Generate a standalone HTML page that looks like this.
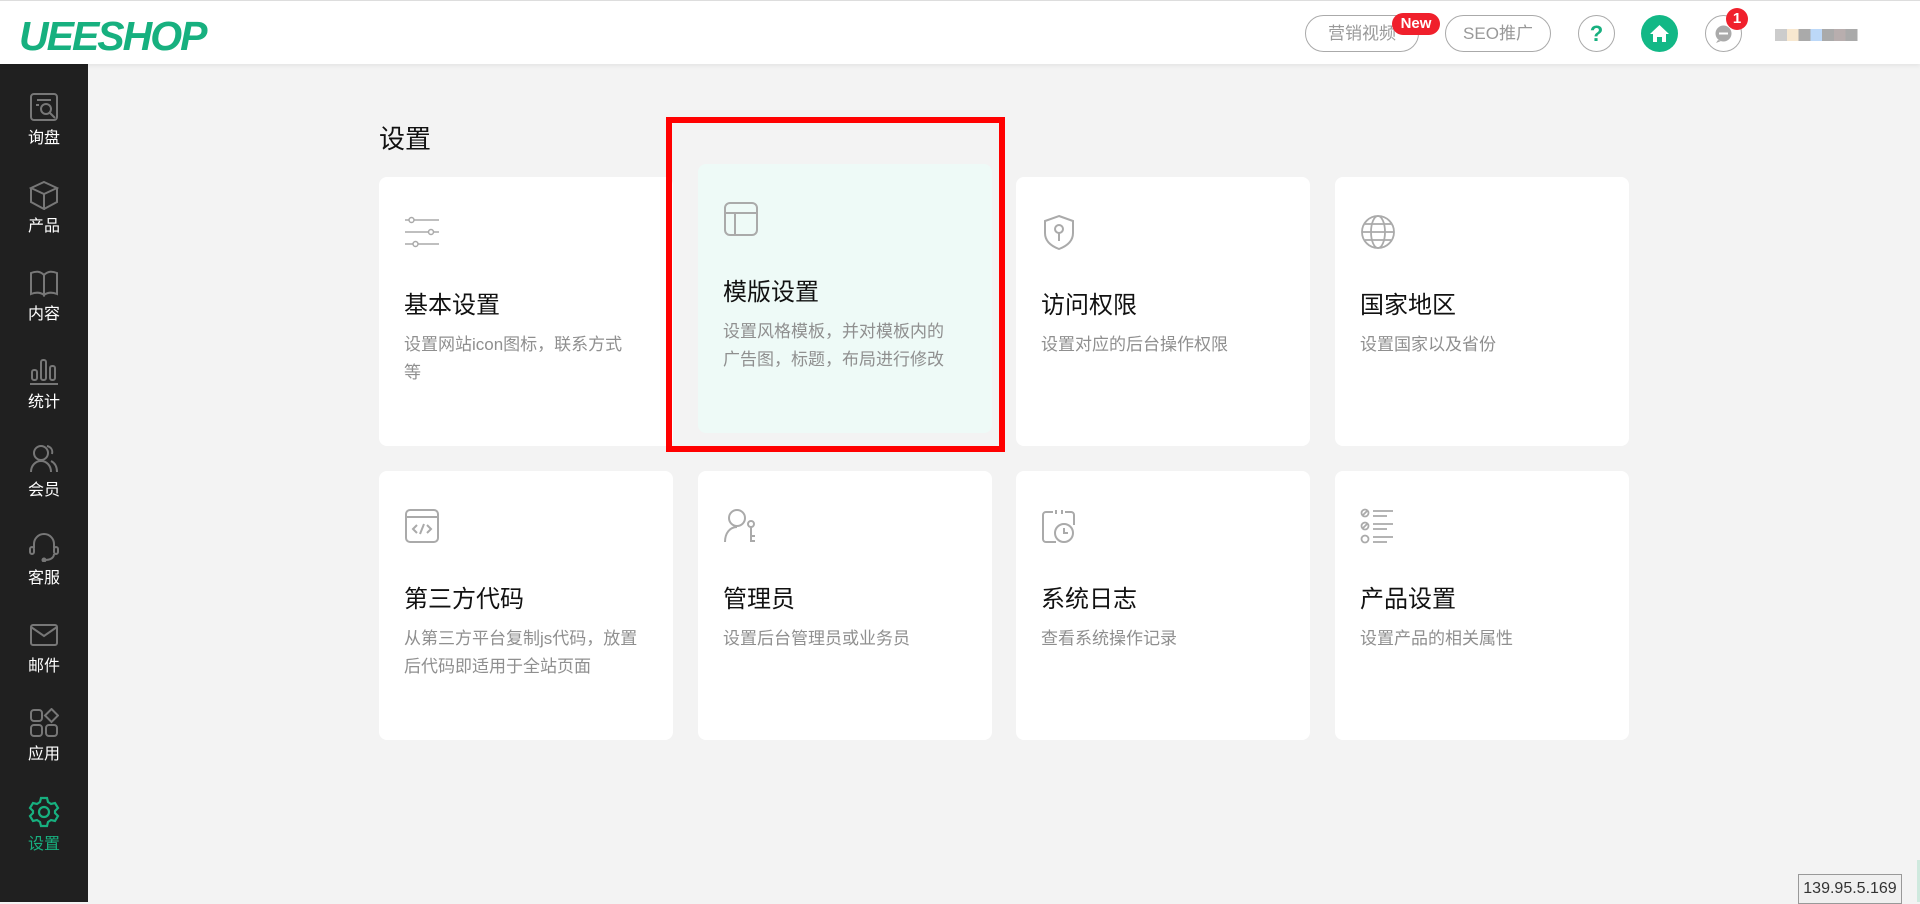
<!DOCTYPE html>
<html><head><meta charset="utf-8">
<style>
*{margin:0;padding:0;box-sizing:border-box}
body{width:1920px;height:902px;overflow:hidden;background:#f3f3f3;font-family:"Liberation Sans","Noto Sans CJK SC",sans-serif;position:relative}
.hdr{position:absolute;left:0;top:0;width:1920px;height:64px;background:#fff;border-top:1px solid #ddd;box-shadow:0 2px 4px rgba(0,0,0,.06);z-index:2}
.logo{position:absolute;left:19px;top:12px;font-size:41px;font-weight:bold;font-style:italic;color:#17b07f;letter-spacing:-2px;font-family:"Liberation Sans",sans-serif}
.pill{position:absolute;top:14px;height:37px;border:1px solid #aaa;border-radius:19px;color:#999;font-size:17px;line-height:35px;text-align:center}
.badge{position:absolute;background:#f0202c;color:#fff;font-weight:bold;text-align:center}
.circ{position:absolute;top:14px;width:37px;height:37px;border-radius:50%}
.side{position:absolute;left:0;top:64px;width:88px;height:838px;background:#202020}
.si{position:absolute;left:0;width:88px;text-align:center;color:#fff;font-size:16px}
.si svg{display:block;margin:0 auto 2px}
.title{position:absolute;left:379px;top:119px;font-size:26px;color:#111}
.card{position:absolute;width:294px;height:269px;background:#fff;border-radius:8px;padding:0 25px}
.card svg{position:absolute;left:25px;top:37px}
.card h3{position:absolute;left:25px;top:108px;font-size:24px;font-weight:normal;color:#111}
.card p{position:absolute;left:25px;top:154px;width:236px;font-size:17px;line-height:28px;color:#8f8f8f}
.red{position:absolute;left:666px;top:117px;width:339px;height:335px;border:6px solid #f00}
.ip{position:absolute;left:1798px;top:874px;width:104px;height:30px;border:1px solid #999;background:#f0f0f0;font-size:16px;color:#333;text-align:center;line-height:28px}
</style></head><body>
<div class="hdr">
<div class="logo">UEESHOP</div>
<div class="pill" style="left:1305px;width:114px">营销视频</div>
<div class="badge" style="left:1392px;top:12px;width:48px;height:22px;border-radius:11px;font-size:15px;line-height:22px">New</div>
<div class="pill" style="left:1445px;width:106px">SEO推广</div>
<div class="circ" style="left:1578px;border:1px solid #aaa;color:#17b07f;font-weight:bold;font-size:22px;text-align:center;line-height:35px">?</div>
<div class="circ" style="left:1641px;background:#12b886"><svg width="37" height="37" viewBox="0 0 37 37"><path d="M9 19 L18.5 10 L28 19 L25 19 L25 27 L21 27 L21 22 L16 22 L16 27 L12 27 L12 19Z" fill="#fff"/></svg></div>
<div class="circ" style="left:1705px;border:1px solid #aaa"><svg width="35" height="35" viewBox="0 0 35 35"><circle cx="17.5" cy="17.5" r="8" fill="#aaa"/><path d="M12 24 L10 27 L15 25Z" fill="#aaa"/><rect x="13" y="16.5" width="9" height="2" fill="#fff"/></svg></div>
<div class="badge" style="left:1726px;top:7px;width:22px;height:22px;border-radius:11px;font-size:15px;line-height:22px">1</div>
<div style="position:absolute;left:1775px;top:28px;width:98px;height:12px;background:linear-gradient(90deg,#ccc 0 12%,#f8e8d0 12% 24%,#aaa 24% 36%,#bcd8f8 36% 48%,#aaa 48% 60%,#b8aeae 60% 72%,#aaa 72% 84%,#fff 84%)"></div>
</div>
<div class="side">
<div class="si" style="top:28px"><svg width="30" height="30" viewBox="0 0 30 30" fill="none" stroke="#777" stroke-width="2"><rect x="2" y="2" width="26" height="26" rx="3"/><path d="M8 8h14M7 13h3"/><circle cx="17" cy="17" r="5"/><path d="M21 21l5 5"/></svg>询盘</div>
<div class="si" style="top:116px"><svg width="30" height="30" viewBox="0 0 30 30" fill="none" stroke="#777" stroke-width="2"><path d="M15 2L28 8L15 14L2 8Z M2 8v14l13 7v-15 M28 8v14l-13 7"/></svg>产品</div>
<div class="si" style="top:204px"><svg width="30" height="30" viewBox="0 0 30 30" fill="none" stroke="#777" stroke-width="2"><path d="M2 5c5-2 9-2 13 2v20c-4-3-8-3-13-1Z M28 5c-5-2-9-2-13 2v20c4-3 8-3 13-1Z"/></svg>内容</div>
<div class="si" style="top:292px"><svg width="30" height="30" viewBox="0 0 30 30" fill="none" stroke="#777" stroke-width="2"><rect x="3" y="14" width="5" height="10" rx="2"/><rect x="12" y="4" width="5" height="20" rx="2"/><rect x="21" y="10" width="5" height="14" rx="2"/><path d="M1 28h28"/></svg>统计</div>
<div class="si" style="top:380px"><svg width="30" height="30" viewBox="0 0 30 30" fill="none" stroke="#777" stroke-width="2"><circle cx="12" cy="9" r="7"/><path d="M2 28c0-7 5-11 10-11s10 4 10 11 M18 2c4 1 6 4 5 8 M22 17c4 2 6 6 6 11"/></svg>会员</div>
<div class="si" style="top:468px"><svg width="30" height="30" viewBox="0 0 30 30" fill="none" stroke="#777" stroke-width="2"><path d="M5 16v-4a10 10 0 0 1 20 0v4"/><rect x="1" y="15" width="4" height="7" rx="2"/><rect x="25" y="15" width="4" height="7" rx="2"/><path d="M25 22c0 4-4 6-9 6"/><circle cx="15" cy="28" r="1.5" fill="#777"/></svg>客服</div>
<div class="si" style="top:556px"><svg width="30" height="30" viewBox="0 0 30 30" fill="none" stroke="#777" stroke-width="2"><rect x="2" y="5" width="26" height="20" rx="2"/><path d="M2 7l13 9 13-9"/></svg>邮件</div>
<div class="si" style="top:644px"><svg width="30" height="30" viewBox="0 0 30 30" fill="none" stroke="#777" stroke-width="2"><rect x="2" y="2" width="11" height="11" rx="3"/><rect x="2" y="17" width="11" height="11" rx="3"/><rect x="17" y="17" width="11" height="11" rx="3"/><path d="M22.5 1L29 7.5L22.5 14L16 7.5Z"/></svg>应用</div>
<div class="si" style="top:732px;color:#17b07f"><svg width="32" height="32" viewBox="0 0 32 32" fill="none" stroke="#17b07f" stroke-width="2.2"><path d="M13 2h6l1 4 3 2 4-1 3 5-3 3v2l3 3-3 5-4-1-3 2-1 4h-6l-1-4-3-2-4 1-3-5 3-3v-2l-3-3 3-5 4 1 3-2Z"/><circle cx="16" cy="16" r="5"/></svg>设置</div>
</div>
<div class="title">设置</div>
<div class="card" style="left:379px;top:177px"><svg width="36" height="36" viewBox="0 0 36 36" fill="none" stroke="#aaa" stroke-width="1.5"><path d="M1 6h4M10 6h25M1 18h23M30 18h5M1 30h8M14 30h21"/><circle cx="7.5" cy="6" r="2.5"/><circle cx="27" cy="18" r="2.5"/><circle cx="11.5" cy="30" r="2.5"/></svg><h3>基本设置</h3><p>设置网站icon图标，联系方式<br>等</p></div>
<div class="card" style="left:698px;top:164px;background:#eefaf7"><svg width="36" height="36" viewBox="0 0 36 36" fill="none" stroke="#aaa" stroke-width="2"><rect x="2" y="2" width="32" height="32" rx="5"/><path d="M2 12h32M12 12v22"/></svg><h3>模版设置</h3><p>设置风格模板，并对模板内的广告图，标题，布局进行修改</p></div>
<div class="red"></div>
<div class="card" style="left:1016px;top:177px"><svg width="36" height="36" viewBox="0 0 36 36" fill="none" stroke="#aaa" stroke-width="2"><path d="M18 2l14 5v12c0 8-6 13-14 16C10 32 4 27 4 19V7Z"/><circle cx="18" cy="15" r="4"/><path d="M18 19v8"/></svg><h3>访问权限</h3><p>设置对应的后台操作权限</p></div>
<div class="card" style="left:1335px;top:177px"><svg width="36" height="36" viewBox="0 0 36 36" fill="none" stroke="#aaa" stroke-width="1.8"><circle cx="18" cy="18" r="16"/><ellipse cx="18" cy="18" rx="7" ry="16"/><path d="M2 18h32M5 10h26M5 26h26"/></svg><h3>国家地区</h3><p>设置国家以及省份</p></div>
<div class="card" style="left:379px;top:471px"><svg width="36" height="36" viewBox="0 0 36 36" fill="none" stroke="#aaa" stroke-width="2"><rect x="2" y="2" width="32" height="32" rx="4"/><path d="M2 9h32M13 17l-4 4 4 4M23 17l4 4-4 4M20 16l-4 10"/></svg><h3>第三方代码</h3><p>从第三方平台复制js代码，放置后代码即适用于全站页面</p></div>
<div class="card" style="left:698px;top:471px"><svg width="36" height="36" viewBox="0 0 36 36" fill="none" stroke="#aaa" stroke-width="2"><circle cx="14" cy="10" r="8"/><path d="M2 34c0-9 5-15 12-15 M28 18v16M28 28h4M28 33h4"/><circle cx="28" cy="16" r="3"/></svg><h3>管理员</h3><p>设置后台管理员或业务员</p></div>
<div class="card" style="left:1016px;top:471px"><svg width="36" height="36" viewBox="0 0 36 36" fill="none" stroke="#aaa" stroke-width="2"><path d="M12 4H5a3 3 0 0 0-3 3v24a3 3 0 0 0 3 3h10M24 4h6a3 3 0 0 1 3 3v10M15 2v4M21 2v4"/><circle cx="23" cy="25" r="9"/><path d="M23 20v5h4"/></svg><h3>系统日志</h3><p>查看系统操作记录</p></div>
<div class="card" style="left:1335px;top:471px"><svg width="36" height="36" viewBox="0 0 36 36" fill="none" stroke="#aaa" stroke-width="1.8"><circle cx="5" cy="5" r="3.5"/><circle cx="5" cy="18" r="3.5"/><circle cx="5" cy="31" r="3.5"/><path d="M3 7l4-4M3 20l4-4M13 3h20M13 8h14M13 16h20M13 21h14M13 29h20M13 34h14"/></svg><h3>产品设置</h3><p>设置产品的相关属性</p></div>
<div class="ip">139.95.5.169</div>
<div style="position:absolute;left:1917px;top:860px;width:3px;height:42px;background:#cfe9de"></div>
</body></html>
